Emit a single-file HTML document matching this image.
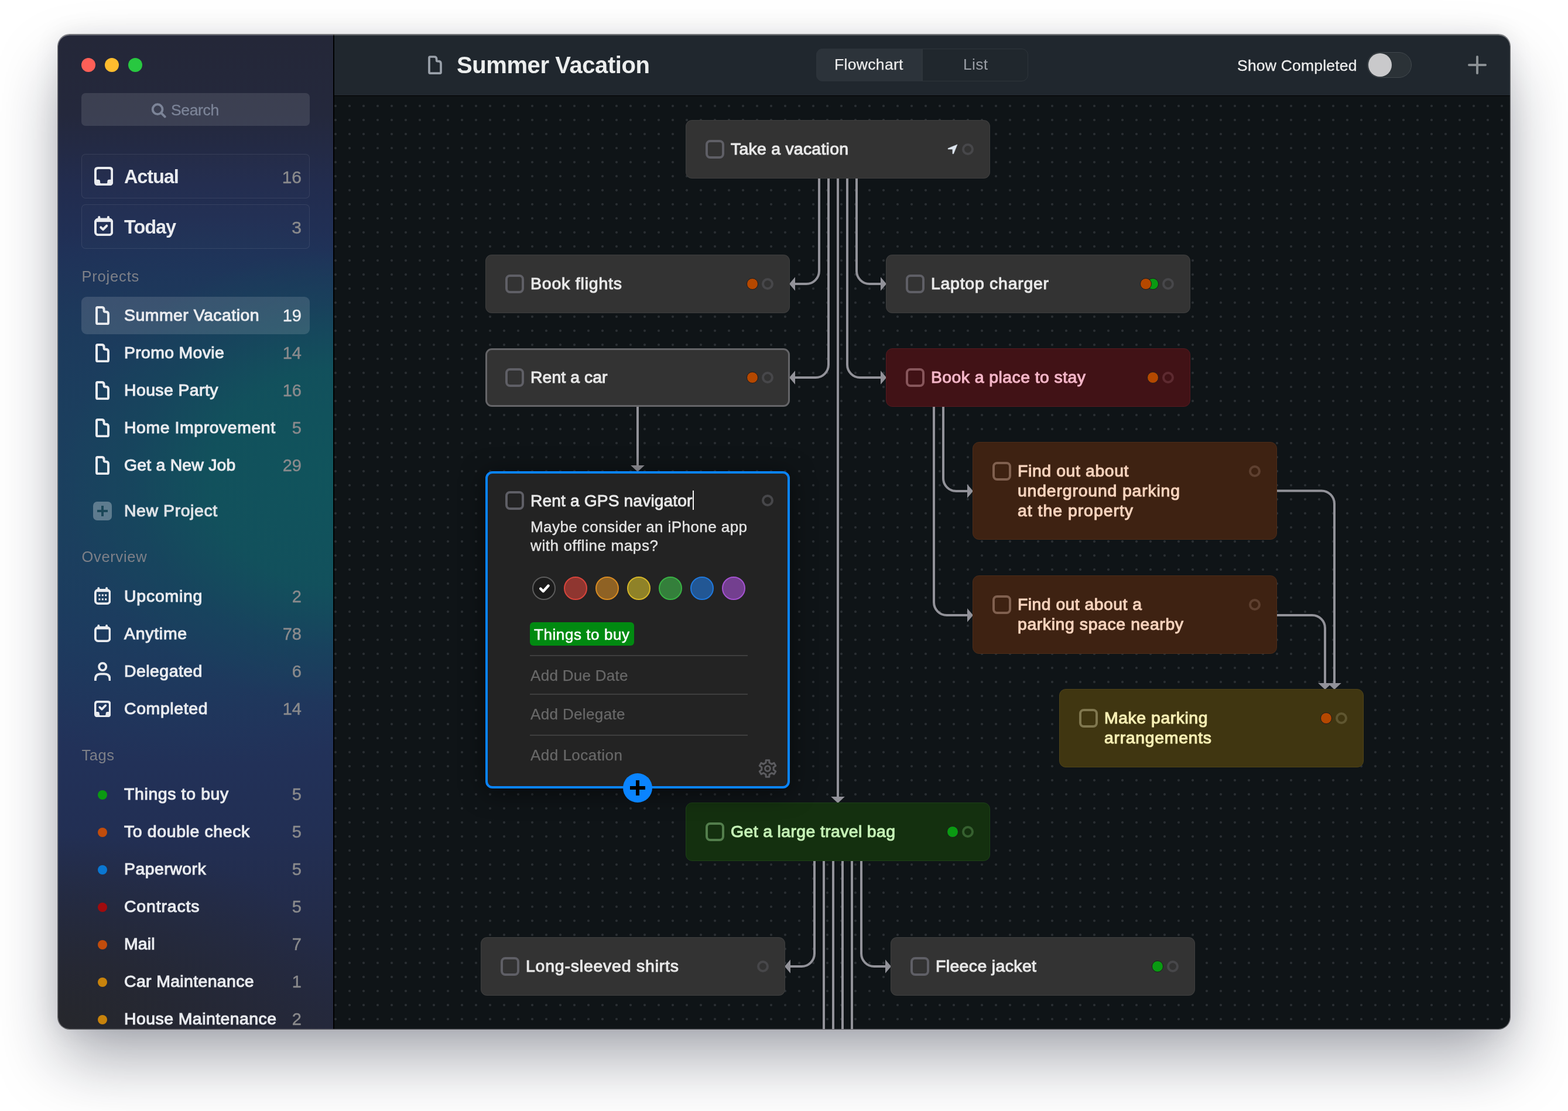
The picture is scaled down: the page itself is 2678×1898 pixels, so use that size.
<!DOCTYPE html>
<html lang="en"><head><meta charset="utf-8"><title>Summer Vacation</title>
<style>
*{box-sizing:border-box;margin:0;padding:0}
html,body{width:2678px;height:1898px;overflow:hidden;background:#fff;font-family:"Liberation Sans",sans-serif;}
body{position:relative}
.abs,.t{position:absolute}
.t{white-space:nowrap}
.sb{-webkit-text-stroke:1.05px currentColor;letter-spacing:0.35px}   /* semi-bold look */
.md{-webkit-text-stroke:0.6px currentColor;letter-spacing:0.3px}   /* medium look */
.b{font-weight:bold}
#shadow{position:absolute;left:99px;top:59px;width:2480px;height:1699px;border-radius:20px;
  box-shadow:0 56px 110px -6px rgba(14,20,40,0.36),0 0 0 1px rgba(0,0,0,0.5),0 0 44px rgba(14,20,40,0.09);}
#win{position:absolute;left:0;top:0;width:2678px;height:1898px;will-change:transform;clip-path:inset(59px 99px 140px 99px round 20px);}
#side{position:absolute;left:99px;top:59px;width:471px;height:1699px;
  background:
   radial-gradient(ellipse 480px 390px at 104% 44.5%, rgba(16,84,92,1) 0%, rgba(17,82,92,0.92) 48%, rgba(19,74,92,0.45) 76%, rgba(20,70,92,0) 100%),
   radial-gradient(ellipse 640px 470px at 55% 46%, rgba(24,70,96,0.85) 0%, rgba(24,66,96,0.5) 55%, rgba(24,66,96,0) 100%),
   radial-gradient(ellipse 520px 330px at 0% 100%, rgba(38,39,44,1) 0%, rgba(38,39,46,0) 100%),
   linear-gradient(180deg,#242738 0%,#24283c 8%,#222c4e 15%,#203158 22%,#1f365a 30%,#1f3a5c 48%,#20365e 60%,#22325a 70%,#222f54 80%,#232b48 90%,#24283c 100%);}
#divider{position:absolute;left:569px;top:59px;width:2px;height:1699px;background:#000}
#tbar{position:absolute;left:571px;top:59px;width:2008px;height:104px;background:#20272e}
#tline{position:absolute;left:571px;top:163px;width:2008px;height:1px;background:#000}
#canvas{position:absolute;left:571px;top:164px;width:2008px;height:1594px;background-color:#0f1417;
  background-image:radial-gradient(circle at 12px 12px,#292e32 0,#292e32 1.55px,rgba(41,46,50,0) 2.45px);
  background-size:24px 24px;background-position:-10px 5px;}
#topedge{position:absolute;left:99px;top:59px;width:2480px;height:1699px;border-radius:20px;
  box-shadow:inset 0 1.5px 0 rgba(255,255,255,0.28), inset 0 0 0 1px rgba(255,255,255,0.10);pointer-events:none}
.card{position:absolute;border-radius:11px;border:1px solid rgba(255,255,255,0.06)}
.cb{position:absolute;width:32px;height:32px;border-radius:8px;border:4px solid #5f5f66}
.ring{position:absolute;width:20px;height:20px;border-radius:50%;border:4px solid #47474a}
.dot{position:absolute;width:20px;height:20px;border-radius:50%;border:1.5px solid #1c1a1c}
.sep{position:absolute;height:2px;background:#3e3e3e}
.sw{position:absolute;width:40px;height:40px;border-radius:50%;border:2px solid}
</style></head><body>
<div id="shadow"></div>
<div id="win">
<div id="side"></div><div id="tbar"></div><div id="canvas"></div><div id="tline"></div><div id="divider"></div>
<div class="abs" style="left:139px;top:99px;width:24px;height:24px;border-radius:50%;background:#fe5f57"></div>
<div class="abs" style="left:179px;top:99px;width:24px;height:24px;border-radius:50%;background:#febc2e"></div>
<div class="abs" style="left:219px;top:99px;width:24px;height:24px;border-radius:50%;background:#28c840"></div>
<div class="abs" style="left:139px;top:159px;width:390px;height:56px;border-radius:7px;background:rgba(255,255,255,0.115)"></div>
<svg class="abs" style="left:258px;top:175px" width="26" height="27" viewBox="0 0 26 27"><circle cx="11.1" cy="11.7" r="8.4" fill="none" stroke="#7c8498" stroke-width="3.9"/><path d="M17.4,18.2 L23.6,24.4" stroke="#7c8498" stroke-width="4" stroke-linecap="round"/></svg>
<div class="t " style="top:172px;font-size:26.5px;line-height:32px;color:#7c8498;left:292px;-webkit-text-stroke:0.3px currentColor;letter-spacing:-0.354px;">Search</div>
<div class="abs" style="left:139px;top:263.3px;width:390px;height:76px;border-radius:7px;border:1.5px solid rgba(255,255,255,0.085);background:rgba(255,255,255,0.012)"></div>
<div class="abs" style="left:139px;top:348.8px;width:390px;height:76px;border-radius:7px;border:1.5px solid rgba(255,255,255,0.085);background:rgba(255,255,255,0.012)"></div>
<svg class="abs" style="left:161px;top:284.9px" width="32.2" height="32.2" viewBox="0 0 32 32"><path fill-rule="evenodd" fill="#e9ebef" d="M6,0 H26 Q32,0 32,6 V26 Q32,32 26,32 H6 Q0,32 0,26 V6 Q0,0 6,0 Z M7,4.1 H25 Q28.1,4.1 28.1,7.1 V21.6 H25.6 Q22.2,21.6 22.2,25 V26.6 Q22.2,28.2 20.6,28.2 H11.6 Q10,28.2 10,26.6 V25 Q10,21.6 6.6,21.6 H3.9 V7.1 Q3.9,4.1 7,4.1 Z"/></svg>
<div class="t b" style="top:282.8px;font-size:32.5px;line-height:39px;color:#e9ebef;left:212px;letter-spacing:-1.106px;">Actual</div>
<div class="t " style="top:284.5px;font-size:30px;line-height:36px;color:#8a8a8c;right:2163px;text-align:right;-webkit-text-stroke:0.45px currentColor;">16</div>
<svg class="abs" style="left:161px;top:368.8px" width="32.2" height="34.2" viewBox="0 0 32.2 34.2"><rect x="2" y="5.6" width="28.2" height="26.6" rx="4.6" fill="none" stroke="#e9ebef" stroke-width="4"/><rect x="2" y="5.6" width="28.2" height="4.6" fill="#e9ebef"/><rect x="6.2754" y="0" width="4" height="6.6" rx="1.8" fill="#e9ebef"/><rect x="21.9246" y="0" width="4" height="6.6" rx="1.8" fill="#e9ebef"/><path d="M11.2,19.4 L15,23 L21.2,16.8" fill="none" stroke="#e9ebef" stroke-width="4.1" stroke-linecap="round" stroke-linejoin="round"/></svg>
<div class="t b" style="top:369.3px;font-size:32.5px;line-height:39px;color:#e9ebef;left:212px;letter-spacing:-1.024px;">Today</div>
<div class="t " style="top:371px;font-size:30px;line-height:36px;color:#8a8a8c;right:2163px;text-align:right;-webkit-text-stroke:0.45px currentColor;">3</div>
<div class="t " style="top:456.8px;font-size:25.5px;line-height:31px;color:#7e8088;left:139.5px;letter-spacing:0.811px;">Projects</div>
<div class="abs" style="left:139px;top:507px;width:390px;height:64px;border-radius:9px;background:rgba(255,255,255,0.135)"></div>
<svg class="abs" style="left:163px;top:522.9px" width="24" height="32.2" viewBox="0 0 24 32.2"><path d="M2,3.6 Q2,2 3.6,2 H10.6 Q14.6,2 14.6,6 V7.7 Q14.6,9.7 16.6,9.7 H18 Q22,9.7 22,13.7 V28.6 Q22,30.2 20.4,30.2 H3.6 Q2,30.2 2,28.6 Z" fill="none" stroke="#e9ebef" stroke-width="4" stroke-linejoin="round"/></svg>
<div class="t sb" style="top:520.8px;font-size:28.4px;line-height:34px;color:#e9ebef;left:212px;letter-spacing:0.504px;">Summer Vacation</div>
<div class="t " style="top:521.9px;font-size:29px;line-height:35px;color:#e9ebef;right:2163px;text-align:right;-webkit-text-stroke:0.45px currentColor;">19</div>
<svg class="abs" style="left:163px;top:586.9px" width="24" height="32.2" viewBox="0 0 24 32.2"><path d="M2,3.6 Q2,2 3.6,2 H10.6 Q14.6,2 14.6,6 V7.7 Q14.6,9.7 16.6,9.7 H18 Q22,9.7 22,13.7 V28.6 Q22,30.2 20.4,30.2 H3.6 Q2,30.2 2,28.6 Z" fill="none" stroke="#e9ebef" stroke-width="4" stroke-linejoin="round"/></svg>
<div class="t sb" style="top:584.8px;font-size:28.4px;line-height:34px;color:#e9ebef;left:212px;letter-spacing:0.345px;">Promo Movie</div>
<div class="t " style="top:585.9px;font-size:29px;line-height:35px;color:#8a8a8c;right:2163px;text-align:right;-webkit-text-stroke:0.45px currentColor;">14</div>
<svg class="abs" style="left:163px;top:650.9px" width="24" height="32.2" viewBox="0 0 24 32.2"><path d="M2,3.6 Q2,2 3.6,2 H10.6 Q14.6,2 14.6,6 V7.7 Q14.6,9.7 16.6,9.7 H18 Q22,9.7 22,13.7 V28.6 Q22,30.2 20.4,30.2 H3.6 Q2,30.2 2,28.6 Z" fill="none" stroke="#e9ebef" stroke-width="4" stroke-linejoin="round"/></svg>
<div class="t sb" style="top:648.8px;font-size:28.4px;line-height:34px;color:#e9ebef;left:212px;letter-spacing:0.418px;">House Party</div>
<div class="t " style="top:649.9px;font-size:29px;line-height:35px;color:#8a8a8c;right:2163px;text-align:right;-webkit-text-stroke:0.45px currentColor;">16</div>
<svg class="abs" style="left:163px;top:714.9px" width="24" height="32.2" viewBox="0 0 24 32.2"><path d="M2,3.6 Q2,2 3.6,2 H10.6 Q14.6,2 14.6,6 V7.7 Q14.6,9.7 16.6,9.7 H18 Q22,9.7 22,13.7 V28.6 Q22,30.2 20.4,30.2 H3.6 Q2,30.2 2,28.6 Z" fill="none" stroke="#e9ebef" stroke-width="4" stroke-linejoin="round"/></svg>
<div class="t sb" style="top:712.8px;font-size:28.4px;line-height:34px;color:#e9ebef;left:212px;letter-spacing:0.587px;">Home Improvement</div>
<div class="t " style="top:713.9px;font-size:29px;line-height:35px;color:#8a8a8c;right:2163px;text-align:right;-webkit-text-stroke:0.45px currentColor;">5</div>
<svg class="abs" style="left:163px;top:778.9px" width="24" height="32.2" viewBox="0 0 24 32.2"><path d="M2,3.6 Q2,2 3.6,2 H10.6 Q14.6,2 14.6,6 V7.7 Q14.6,9.7 16.6,9.7 H18 Q22,9.7 22,13.7 V28.6 Q22,30.2 20.4,30.2 H3.6 Q2,30.2 2,28.6 Z" fill="none" stroke="#e9ebef" stroke-width="4" stroke-linejoin="round"/></svg>
<div class="t sb" style="top:776.8px;font-size:28.4px;line-height:34px;color:#e9ebef;left:212px;letter-spacing:0.217px;">Get a New Job</div>
<div class="t " style="top:777.9px;font-size:29px;line-height:35px;color:#8a8a8c;right:2163px;text-align:right;-webkit-text-stroke:0.45px currentColor;">29</div>
<div class="abs" style="left:159px;top:857px;width:32px;height:32px;border-radius:7px;background:rgba(255,255,255,0.30)"></div>
<div class="abs" style="left:166px;top:871px;width:18px;height:4px;background:#1b4758"></div>
<div class="abs" style="left:173px;top:864px;width:4px;height:18px;background:#1b4758"></div>
<div class="t sb" style="top:854.8px;font-size:28.4px;line-height:34px;color:#dfe2e6;left:212px;letter-spacing:0.605px;">New Project</div>
<div class="t " style="top:935.8px;font-size:25.5px;line-height:31px;color:#7e8088;left:139.5px;letter-spacing:0.688px;">Overview</div>
<svg class="abs" style="left:160.8px;top:1003.1px" width="28.4" height="30" viewBox="0 0 28.4 30"><rect x="1.9" y="4.9" width="24.6" height="23.2" rx="4.6" fill="none" stroke="#e9ebef" stroke-width="3.8"/><rect x="1.9" y="4.9" width="24.6" height="3.3" fill="#e9ebef"/><rect x="5.3988" y="0" width="3.8" height="6" rx="1.8" fill="#e9ebef"/><rect x="19.2012" y="0" width="3.8" height="6" rx="1.8" fill="#e9ebef"/><rect x="7.4" y="12.3" width="3" height="3.1" fill="#e9ebef"/><rect x="12.8" y="12.3" width="3" height="3.1" fill="#e9ebef"/><rect x="18.2" y="12.3" width="3" height="3.1" fill="#e9ebef"/><rect x="7.4" y="19.3" width="3" height="3.1" fill="#e9ebef"/><rect x="12.8" y="19.3" width="3" height="3.1" fill="#e9ebef"/><rect x="18.2" y="19.3" width="3" height="3.1" fill="#e9ebef"/></svg>
<div class="t sb" style="top:1000.8px;font-size:28.4px;line-height:34px;color:#e9ebef;left:212px;letter-spacing:0.796px;">Upcoming</div>
<div class="t " style="top:1001.9px;font-size:29px;line-height:35px;color:#8a8a8c;right:2163px;text-align:right;-webkit-text-stroke:0.45px currentColor;">2</div>
<svg class="abs" style="left:160.8px;top:1067.1px" width="28.4" height="30" viewBox="0 0 28.4 30"><rect x="1.9" y="4.9" width="24.6" height="23.2" rx="4.6" fill="none" stroke="#e9ebef" stroke-width="3.8"/><rect x="1.9" y="4.9" width="24.6" height="3.3" fill="#e9ebef"/><rect x="5.3988" y="0" width="3.8" height="6" rx="1.8" fill="#e9ebef"/><rect x="19.2012" y="0" width="3.8" height="6" rx="1.8" fill="#e9ebef"/></svg>
<div class="t sb" style="top:1064.8px;font-size:28.4px;line-height:34px;color:#e9ebef;left:212px;letter-spacing:0.756px;">Anytime</div>
<div class="t " style="top:1065.9px;font-size:29px;line-height:35px;color:#8a8a8c;right:2163px;text-align:right;-webkit-text-stroke:0.45px currentColor;">78</div>
<svg class="abs" style="left:160.8px;top:1130.8px" width="28.4" height="32.4" viewBox="0 0 28.4 32.4"><circle cx="14.2" cy="8" r="6.1" fill="none" stroke="#e9ebef" stroke-width="3.8"/><path d="M1.9,32.4 V29.4 Q1.9,20.4 10.9,20.4 H17.5 Q26.5,20.4 26.5,29.4 V32.4" fill="none" stroke="#e9ebef" stroke-width="3.8"/></svg>
<div class="t sb" style="top:1128.8px;font-size:28.4px;line-height:34px;color:#e9ebef;left:212px;letter-spacing:0.495px;">Delegated</div>
<div class="t " style="top:1129.9px;font-size:29px;line-height:35px;color:#8a8a8c;right:2163px;text-align:right;-webkit-text-stroke:0.45px currentColor;">6</div>
<svg class="abs" style="left:160.8px;top:1196.9px" width="28.3" height="28.3" viewBox="0 0 32 32"><path fill-rule="evenodd" fill="#e9ebef" d="M6,0 H26 Q32,0 32,6 V26 Q32,32 26,32 H6 Q0,32 0,26 V6 Q0,0 6,0 Z M7,4.1 H25 Q28.1,4.1 28.1,7.1 V21.6 H25.6 Q22.2,21.6 22.2,25 V26.6 Q22.2,28.2 20.6,28.2 H11.6 Q10,28.2 10,26.6 V25 Q10,21.6 6.6,21.6 H3.9 V7.1 Q3.9,4.1 7,4.1 Z"/><path d="M10.4,12.6 L14.6,16.6 L21.8,9.2" fill="none" stroke="#e9ebef" stroke-width="4.2" stroke-linecap="round" stroke-linejoin="round"/></svg>
<div class="t sb" style="top:1192.8px;font-size:28.4px;line-height:34px;color:#e9ebef;left:212px;letter-spacing:0.650px;">Completed</div>
<div class="t " style="top:1193.9px;font-size:29px;line-height:35px;color:#8a8a8c;right:2163px;text-align:right;-webkit-text-stroke:0.45px currentColor;">14</div>
<div class="t " style="top:1274.8px;font-size:25.5px;line-height:31px;color:#7e8088;left:139.5px;letter-spacing:0.575px;">Tags</div>
<div class="abs" style="left:167px;top:1349.5px;width:16px;height:16px;border-radius:50%;background:#0b9a12"></div>
<div class="t sb" style="top:1339.3px;font-size:28.4px;line-height:34px;color:#e9ebef;left:212px;letter-spacing:0.646px;">Things to buy</div>
<div class="t " style="top:1340.4px;font-size:29px;line-height:35px;color:#8a8a8c;right:2163px;text-align:right;-webkit-text-stroke:0.45px currentColor;">5</div>
<div class="abs" style="left:167px;top:1413.5px;width:16px;height:16px;border-radius:50%;background:#c14c0c"></div>
<div class="t sb" style="top:1403.3px;font-size:28.4px;line-height:34px;color:#e9ebef;left:212px;letter-spacing:0.651px;">To double check</div>
<div class="t " style="top:1404.4px;font-size:29px;line-height:35px;color:#8a8a8c;right:2163px;text-align:right;-webkit-text-stroke:0.45px currentColor;">5</div>
<div class="abs" style="left:167px;top:1477.5px;width:16px;height:16px;border-radius:50%;background:#0a77d2"></div>
<div class="t sb" style="top:1467.3px;font-size:28.4px;line-height:34px;color:#e9ebef;left:212px;letter-spacing:0.500px;">Paperwork</div>
<div class="t " style="top:1468.4px;font-size:29px;line-height:35px;color:#8a8a8c;right:2163px;text-align:right;-webkit-text-stroke:0.45px currentColor;">5</div>
<div class="abs" style="left:167px;top:1541.5px;width:16px;height:16px;border-radius:50%;background:#a00b0e"></div>
<div class="t sb" style="top:1531.3px;font-size:28.4px;line-height:34px;color:#e9ebef;left:212px;letter-spacing:0.862px;">Contracts</div>
<div class="t " style="top:1532.4px;font-size:29px;line-height:35px;color:#8a8a8c;right:2163px;text-align:right;-webkit-text-stroke:0.45px currentColor;">5</div>
<div class="abs" style="left:167px;top:1605.5px;width:16px;height:16px;border-radius:50%;background:#c14c0c"></div>
<div class="t sb" style="top:1595.3px;font-size:28.4px;line-height:34px;color:#e9ebef;left:212px;letter-spacing:0.179px;">Mail</div>
<div class="t " style="top:1596.4px;font-size:29px;line-height:35px;color:#8a8a8c;right:2163px;text-align:right;-webkit-text-stroke:0.45px currentColor;">7</div>
<div class="abs" style="left:167px;top:1669.5px;width:16px;height:16px;border-radius:50%;background:#c8830c"></div>
<div class="t sb" style="top:1659.3px;font-size:28.4px;line-height:34px;color:#e9ebef;left:212px;letter-spacing:0.378px;">Car Maintenance</div>
<div class="t " style="top:1660.4px;font-size:29px;line-height:35px;color:#8a8a8c;right:2163px;text-align:right;-webkit-text-stroke:0.45px currentColor;">1</div>
<div class="abs" style="left:167px;top:1733.5px;width:16px;height:16px;border-radius:50%;background:#c8830c"></div>
<div class="t sb" style="top:1723.3px;font-size:28.4px;line-height:34px;color:#e9ebef;left:212px;letter-spacing:0.467px;">House Maintenance</div>
<div class="t " style="top:1724.4px;font-size:29px;line-height:35px;color:#8a8a8c;right:2163px;text-align:right;-webkit-text-stroke:0.45px currentColor;">2</div>
<svg class="abs" style="left:731px;top:95px" width="24" height="32.2" viewBox="0 0 24 32.2"><path d="M2,3.6 Q2,2 3.6,2 H10.6 Q14.6,2 14.6,6 V7.7 Q14.6,9.7 16.6,9.7 H18 Q22,9.7 22,13.7 V28.6 Q22,30.2 20.4,30.2 H3.6 Q2,30.2 2,28.6 Z" fill="none" stroke="#9aa1aa" stroke-width="3.7" stroke-linejoin="round"/></svg>
<div class="t b" style="top:87px;font-size:40px;line-height:48px;color:#eceeee;left:780px;letter-spacing:-0.406px;">Summer Vacation</div>
<div class="abs" style="left:1394px;top:83px;width:362px;height:56px;border-radius:11px;border:1.5px solid #2e353b;background:#20272d"></div>
<div class="abs" style="left:1394px;top:83px;width:181px;height:56px;border-radius:11px 0 0 11px;background:#2c333a"></div>
<div class="abs" style="left:1574px;top:84px;width:1.5px;height:54px;background:#2e353b"></div>
<div class="t " style="top:94px;font-size:26.5px;line-height:32px;color:#ececec;left:1425px;-webkit-text-stroke:0.25px currentColor;letter-spacing:0.328px;">Flowchart</div>
<div class="t " style="top:94px;font-size:26.5px;line-height:32px;color:#9a9ea5;left:1645px;letter-spacing:0.250px;">List</div>
<div class="t " style="top:96px;font-size:26.5px;line-height:32px;color:#ececec;left:2113px;-webkit-text-stroke:0.3px currentColor;letter-spacing:0.207px;">Show Completed</div>
<div class="abs" style="left:2335px;top:89px;width:76px;height:44px;border-radius:22px;background:#2b3237;border:1.5px solid #41484d"></div>
<div class="abs" style="left:2337px;top:91px;width:40px;height:40px;border-radius:50%;background:#c9c9cb"></div>
<div class="abs" style="left:2507px;top:109.25px;width:32px;height:3.5px;border-radius:2px;background:#8b9094"></div>
<div class="abs" style="left:2521.25px;top:95px;width:3.5px;height:32px;border-radius:2px;background:#8b9094"></div>
<svg class="abs" style="left:0;top:0" width="2678" height="1898" viewBox="0 0 2678 1898"><g fill="none" stroke="#929299" stroke-width="4"><path d="M1399,305 V463 A22,22 0 0 1 1377,485 H1357"/><path d="M1415,305 V623 A22,22 0 0 1 1393,645 H1357"/><path d="M1431,305 V1363"/><path d="M1447,305 V623 A22,22 0 0 0 1469,645 H1505"/><path d="M1463,305 V463 A22,22 0 0 0 1485,485 H1505"/><path d="M1089,695 V797"/><path d="M1595,695 V1029 A22,22 0 0 0 1617,1051 H1653"/><path d="M1611,695 V817 A22,22 0 0 0 1633,839 H1653"/><path d="M2181,838.5 H2257 A22,22 0 0 1 2279,860.5 V1169"/><path d="M2181,1051 H2241 A22,22 0 0 1 2263,1073 V1169"/><path d="M1391,1471 V1629 A22,22 0 0 1 1369,1651 H1349"/><path d="M1407,1471 V1760"/><path d="M1423,1471 V1760"/><path d="M1439,1471 V1760"/><path d="M1455,1471 V1760"/><path d="M1471,1471 V1629 A22,22 0 0 0 1493,1651 H1513"/></g><g fill="#929299"><polygon points="1348,485 1358,473.2 1358,496.8"/><polygon points="1348,645 1358,633.2 1358,656.8"/><polygon points="1431,1372 1419.2,1361 1442.8,1361"/><polygon points="1514,645 1504,633.2 1504,656.8"/><polygon points="1514,485 1504,473.2 1504,496.8"/><polygon points="1089,806 1077.2,795 1100.8,795"/><polygon points="1662,1051 1652,1039.2 1652,1062.8"/><polygon points="1662,839 1652,827.2 1652,850.8"/><polygon points="2279,1178 2267.2,1167 2290.8,1167"/><polygon points="2263,1178 2251.2,1167 2274.8,1167"/><polygon points="1340,1651 1350,1639.2 1350,1662.8"/><polygon points="1522,1651 1512,1639.2 1512,1662.8"/></g></svg>
<div class="card" style="left:1171px;top:205px;width:520px;height:100px;background:#333333;border:1px solid rgba(255,255,255,0.055)"></div>
<div class="cb" style="left:1205px;top:239px;border-color:#5f5f66"></div>
<div class="t sb" style="top:237.2px;font-size:28.4px;line-height:34px;color:#e8e8e8;left:1248px;letter-spacing:0.266px;">Take a vacation</div>
<div class="ring" style="left:1643px;top:245px;border-color:#47474a"></div>
<svg class="abs" style="left:1618px;top:246px" width="18" height="18" viewBox="0 0 18 18"><path d="M17,0.9 L1.1,7.4 V8.9 H8.9 V16.8 H10.6 Z" fill="#dde5ee" stroke="#dde5ee" stroke-width="0.5" stroke-linejoin="round"/></svg>
<div class="card" style="left:829px;top:435px;width:520px;height:100px;background:#333333;border:1px solid rgba(255,255,255,0.055)"></div>
<div class="cb" style="left:863px;top:469px;border-color:#5f5f66"></div>
<div class="t sb" style="top:467.2px;font-size:28.4px;line-height:34px;color:#e8e8e8;left:906px;letter-spacing:0.839px;">Book flights</div>
<div class="ring" style="left:1301px;top:475px;border-color:#47474a"></div>
<div class="dot" style="left:1274.5px;top:475px;background:#b54800;z-index:2"></div>
<div class="card" style="left:1513px;top:435px;width:520px;height:100px;background:#333333;border:1px solid rgba(255,255,255,0.055)"></div>
<div class="cb" style="left:1547px;top:469px;border-color:#5f5f66"></div>
<div class="t sb" style="top:467.2px;font-size:28.4px;line-height:34px;color:#e8e8e8;left:1590px;letter-spacing:0.769px;">Laptop charger</div>
<div class="ring" style="left:1985px;top:475px;border-color:#47474a"></div>
<div class="dot" style="left:1959px;top:475px;background:#0a9a12;z-index:2"></div>
<div class="dot" style="left:1947px;top:475px;background:#b54800;z-index:3"></div>
<div class="card" style="left:829px;top:595px;width:520px;height:100px;background:#333333;border:3.5px solid #656568"></div>
<div class="cb" style="left:863px;top:629px;border-color:#5f5f66"></div>
<div class="t sb" style="top:627.2px;font-size:28.4px;line-height:34px;color:#e8e8e8;left:906px;letter-spacing:0.057px;">Rent a car</div>
<div class="ring" style="left:1301px;top:635px;border-color:#47474a"></div>
<div class="dot" style="left:1274.5px;top:635px;background:#b54800;z-index:2"></div>
<div class="card" style="left:1513px;top:595px;width:520px;height:100px;background:#411216;border:1px solid #551a20"></div>
<div class="cb" style="left:1547px;top:629px;border-color:#87565b"></div>
<div class="t sb" style="top:627.2px;font-size:28.4px;line-height:34px;color:#f5b6c8;left:1590px;letter-spacing:0.438px;">Book a place to stay</div>
<div class="ring" style="left:1985px;top:635px;border-color:#5d2a30"></div>
<div class="dot" style="left:1958.5px;top:635px;background:#b54800;z-index:2"></div>
<div class="card" style="left:1661px;top:755px;width:520px;height:167px;background:#3e2212;border:1px solid #4d2c18"></div>
<div class="cb" style="left:1695px;top:789px;border-color:#80604f"></div>
<div class="t sb" style="top:787.2px;font-size:28.4px;line-height:34px;color:#f7d3bd;left:1738px;letter-spacing:0.613px;">Find out about</div>
<div class="t sb" style="top:821.2px;font-size:28.4px;line-height:34px;color:#f7d3bd;left:1738px;letter-spacing:0.832px;">underground parking</div>
<div class="t sb" style="top:855.2px;font-size:28.4px;line-height:34px;color:#f7d3bd;left:1738px;letter-spacing:0.994px;">at the property</div>
<div class="ring" style="left:2133px;top:795px;border-color:#5e4030"></div>
<div class="card" style="left:1661px;top:983px;width:520px;height:134px;background:#3e2212;border:1px solid #4d2c18"></div>
<div class="cb" style="left:1695px;top:1017px;border-color:#80604f"></div>
<div class="t sb" style="top:1015.2px;font-size:28.4px;line-height:34px;color:#f7d3bd;left:1738px;letter-spacing:0.453px;">Find out about a</div>
<div class="t sb" style="top:1049.2px;font-size:28.4px;line-height:34px;color:#f7d3bd;left:1738px;letter-spacing:0.607px;">parking space nearby</div>
<div class="ring" style="left:2133px;top:1023px;border-color:#5e4030"></div>
<div class="card" style="left:1809px;top:1177px;width:520px;height:134px;background:#403611;border:1px solid #504418"></div>
<div class="cb" style="left:1843px;top:1211px;border-color:#80774f"></div>
<div class="t sb" style="top:1209.2px;font-size:28.4px;line-height:34px;color:#f7efb4;left:1886px;letter-spacing:0.551px;">Make parking</div>
<div class="t sb" style="top:1243.2px;font-size:28.4px;line-height:34px;color:#f7efb4;left:1886px;letter-spacing:0.712px;">arrangements</div>
<div class="ring" style="left:2281px;top:1217px;border-color:#5f5630"></div>
<div class="dot" style="left:2254.5px;top:1217px;background:#b54800;z-index:2"></div>
<div class="card" style="left:1171px;top:1371px;width:520px;height:100px;background:#14300f;border:1px solid #1d4217"></div>
<div class="cb" style="left:1205px;top:1405px;border-color:#537e4c"></div>
<div class="t sb" style="top:1403.2px;font-size:28.4px;line-height:34px;color:#c5f2b6;left:1248px;letter-spacing:0.379px;">Get a large travel bag</div>
<div class="ring" style="left:1643px;top:1411px;border-color:#36602f"></div>
<div class="dot" style="left:1616.5px;top:1411px;background:#0a9a12;z-index:2"></div>
<div class="card" style="left:821px;top:1601px;width:520px;height:100px;background:#333333;border:1px solid rgba(255,255,255,0.055)"></div>
<div class="cb" style="left:855px;top:1635px;border-color:#5f5f66"></div>
<div class="t sb" style="top:1633.2px;font-size:28.4px;line-height:34px;color:#e8e8e8;left:898px;letter-spacing:0.823px;">Long-sleeved shirts</div>
<div class="ring" style="left:1293px;top:1641px;border-color:#47474a"></div>
<div class="card" style="left:1521px;top:1601px;width:520px;height:100px;background:#333333;border:1px solid rgba(255,255,255,0.055)"></div>
<div class="cb" style="left:1555px;top:1635px;border-color:#5f5f66"></div>
<div class="t sb" style="top:1633.2px;font-size:28.4px;line-height:34px;color:#e8e8e8;left:1598px;letter-spacing:0.393px;">Fleece jacket</div>
<div class="ring" style="left:1993px;top:1641px;border-color:#47474a"></div>
<div class="dot" style="left:1966.5px;top:1641px;background:#0a9a12;z-index:2"></div>
<div class="abs" style="left:829px;top:805px;width:520px;height:542px;border-radius:12px;background:#232323;border:4px solid #0a84ff;box-shadow:0 6px 40px rgba(0,0,0,0.55)"></div>
<div class="cb" style="left:863px;top:839px"></div>
<div class="t md" style="top:838px;font-size:28.2px;line-height:34px;color:#e8e8e8;left:906px;-webkit-text-stroke:0.9px currentColor;letter-spacing:0.121px;">Rent a GPS navigator</div>
<div class="abs" style="left:1183px;top:837.5px;width:2px;height:33.5px;background:#f2f2f2"></div>
<div class="ring" style="left:1301px;top:845px;border-color:#47474a"></div>
<div class="t " style="top:884px;font-size:26px;line-height:32px;color:#e2e2e2;left:906px;-webkit-text-stroke:0.45px currentColor;letter-spacing:0.427px;">Maybe consider an iPhone app</div>
<div class="t " style="top:916px;font-size:26px;line-height:32px;color:#e2e2e2;left:906px;-webkit-text-stroke:0.45px currentColor;letter-spacing:0.609px;">with offline maps?</div>
<div class="sw" style="left:909px;top:985px;background:#1b1b1b;border-color:#5c5c5c"></div>
<div class="sw" style="left:963px;top:985px;background:#8f3630;border-color:#d9453c"></div>
<div class="sw" style="left:1017px;top:985px;background:#8f6224;border-color:#d88b22"></div>
<div class="sw" style="left:1071px;top:985px;background:#8f8228;border-color:#d6b628"></div>
<div class="sw" style="left:1125px;top:985px;background:#347f3b;border-color:#39b244"></div>
<div class="sw" style="left:1179px;top:985px;background:#225794;border-color:#1f79de"></div>
<div class="sw" style="left:1233px;top:985px;background:#733f8f;border-color:#a553d2"></div>
<svg class="abs" style="left:919px;top:995.3px" width="22" height="20" viewBox="0 0 22 20"><path d="M4.2,10.6 L8.8,15.2 L17.6,5.6" fill="none" stroke="#fff" stroke-width="4.4" stroke-linecap="round" stroke-linejoin="round"/></svg>
<div class="abs" style="left:905px;top:1063px;width:178px;height:40px;border-radius:6px;background:#018a11"></div>
<div class="t md" style="top:1068.9px;font-size:26px;line-height:31px;color:#ffffff;left:912px;letter-spacing:0.576px;">Things to buy</div>
<div class="sep" style="left:905px;top:1119px;width:372px"></div>
<div class="sep" style="left:905px;top:1185px;width:372px"></div>
<div class="sep" style="left:905px;top:1255px;width:372px"></div>
<div class="t " style="top:1138.5px;font-size:26px;line-height:31px;color:#686868;left:906px;-webkit-text-stroke:0.25px currentColor;letter-spacing:0.288px;">Add Due Date</div>
<div class="t " style="top:1204.5px;font-size:26px;line-height:31px;color:#686868;left:906px;-webkit-text-stroke:0.25px currentColor;letter-spacing:0.358px;">Add Delegate</div>
<div class="t " style="top:1274.5px;font-size:26px;line-height:31px;color:#686868;left:906px;-webkit-text-stroke:0.25px currentColor;letter-spacing:0.473px;">Add Location</div>
<svg class="abs" style="left:1295px;top:1297px" width="32" height="32" viewBox="0 0 32 32"><polygon points="12.96,6.05 13.21,1.67 18.79,1.67 19.04,6.05 23.09,8.39 27.02,6.42 29.80,11.25 26.13,13.66 26.13,18.34 29.80,20.75 27.02,25.58 23.09,23.61 19.04,25.95 18.79,30.33 13.21,30.33 12.96,25.95 8.91,23.61 4.98,25.58 2.20,20.75 5.87,18.34 5.87,13.66 2.20,11.25 4.98,6.42 8.91,8.39" fill="none" stroke="#5c5c60" stroke-width="3" stroke-linejoin="round"/><circle cx="16" cy="16" r="4.4" fill="none" stroke="#5c5c60" stroke-width="3"/></svg>
<div class="abs" style="left:1064px;top:1321px;width:50px;height:50px;border-radius:50%;background:#0a84ff"></div>
<div class="abs" style="left:1076px;top:1343px;width:26px;height:6px;background:#000"></div>
<div class="abs" style="left:1086px;top:1333px;width:6px;height:26px;background:#000"></div>
<div id="topedge"></div>
</div>
</body></html>
